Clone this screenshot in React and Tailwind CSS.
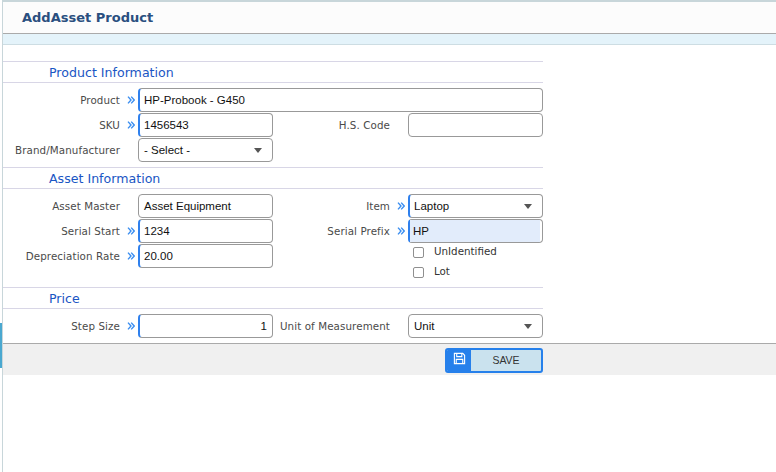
const labelClass = "pt-[1px] text-right text-[10.3px] text-[#4a4a4a] pr-[18px] whitespace-nowrap tracking-[0.1px]";
const inputClass = "h-[24px] w-full rounded-[4px] border border-[#999999] bg-white px-[5px] pt-[1px] text-[11.5px] text-[#111111] flex items-center";
const lineClass = "border-t border-[#d8d6e6]";
const labelFont = { fontFamily: '"DejaVu Sans", sans-serif' };

function Chevrons() {
  return (
    <svg viewBox="0 0 8 8" className="absolute right-[3px] top-[8px] h-[8px] w-[8px]" fill="none" stroke="#3b8ef0" strokeWidth="1.4">
      <path d="M1 0.6 L4 4 L1 7.4" />
      <path d="M4.2 0.6 L7.2 4 L4.2 7.4" />
    </svg>
  );
}

function Label({ text, required }) {
  return (
    <div className="relative flex h-[24px] items-center justify-end">
      <span className={labelClass} style={labelFont}>{text}</span>
      {required && <Chevrons />}
    </div>
  );
}

function Field({ value, required, right }) {
  return (
    <div className={`${inputClass} ${required ? "border-l-2 border-l-[#2f80ed] pl-[4px]" : ""} ${right ? "justify-end" : ""}`}>
      {value}
    </div>
  );
}

function SelectBox({ value, required }) {
  return (
    <div className={`${inputClass} justify-between pr-[10px] ${required ? "border-l-2 border-l-[#2f80ed] pl-[4px]" : ""}`}>
      <span>{value}</span>
      <span className="h-0 w-0 border-x-[4.5px] border-t-[5px] border-x-transparent border-t-[#555555]" />
    </div>
  );
}

function SectionTitle({ text }) {
  return (
    <div className={`${lineClass} h-[21px] pl-[46px] pt-[2px] text-[12.6px] leading-[17px] text-[#1a56c4]`} style={labelFont}>
      {text}
    </div>
  );
}

function Check({ text }) {
  return (
    <div className="flex h-[20px] items-center pl-[5px]">
      <span className="h-[11px] w-[11px] rounded-[2px] border border-[#8f8f8f] bg-white" />
      <span className="pl-[10px] text-[10.3px] text-[#333333]" style={labelFont}>{text}</span>
    </div>
  );
}

const gridClass = "grid grid-cols-[135px_135px_135px_135px] gap-y-[1px] border-t border-[#d8d6e6] pt-[5px] w-[540px]";

export default function App() {
  return (
    <div className="relative h-[472px] w-[776px] overflow-hidden bg-white" style={{ fontFamily: '"Liberation Sans", Arial, sans-serif' }}>
      <div className="absolute left-0 top-[323px] h-[45px] w-[2px] bg-[#4aa8d0]" />
      <div className="ml-[2px] h-full border-l border-[#c8d6da]">
        <div className="h-[2px] -ml-[1px] bg-[#c8d6da]" />
        <div className="h-[32px] border-b border-[#aaaaaa] bg-[#fcfcfc] pl-[19px] pt-[6px] text-[13px] font-bold leading-[20px] text-[#2a4f7f]" style={labelFont}>
          AddAsset Product
        </div>
        <div className="h-[11px] border-b border-[#cddde3] bg-[#e4f3fa]" />
        <div className="h-[16px]" />

        <div className="w-[540px]">
          <SectionTitle text="Product Information" />
          <div className={gridClass}>
            <Label text="Product" required />
            <div className="col-span-3 w-[405px]"><Field value="HP-Probook - G450" required /></div>
            <Label text="SKU" required />
            <Field value="1456543" required />
            <Label text="H.S. Code" />
            <Field value="" />
            <Label text="Brand/Manufacturer" />
            <SelectBox value="- Select -" />
          </div>
          <div className="h-[5px]" />

          <SectionTitle text="Asset Information" />
          <div className={gridClass}>
            <Label text="Asset Master" />
            <Field value="Asset Equipment" />
            <Label text="Item" required />
            <SelectBox value="Laptop" required />
            <Label text="Serial Start" required />
            <Field value="1234" required />
            <Label text="Serial Prefix" required />
            <div className="h-[24px] rounded-[4px] border border-l-2 border-[#999999] border-l-[#2f80ed] bg-white">
              <div className="mr-[2px] flex h-full items-center bg-[#e2ecfb] pl-[3px] pt-[1px] text-[11.5px] text-[#111111]">HP</div>
            </div>
            <Label text="Depreciation Rate" required />
            <Field value="20.00" required />
            <div />
            <div className="-mt-[2px]">
              <Check text="UnIdentified" />
              <Check text="Lot" />
            </div>
          </div>
          <div className="h-[5px]" />

          <SectionTitle text="Price" />
          <div className={gridClass}>
            <Label text="Step Size" required />
            <Field value="1" required right />
            <Label text="Unit of Measurement" />
            <SelectBox value="Unit" />
          </div>
        </div>

        <div className="mt-[5px] flex h-[32px] w-full justify-start border-t border-[#aaaaaa] bg-[#f0f0f0] pl-[442px] pt-[4px]">
          <div className="flex h-[25px] w-[98px] overflow-hidden rounded-[3px] border-2 border-[#2680eb] bg-[#cae2ee]">
            <div className="flex w-[24px] items-start justify-center bg-[#2680eb] pt-[2px]">
              <svg viewBox="0 0 14 14" className="h-[13px] w-[13px]" fill="none" stroke="white" strokeWidth="1.2">
                <path d="M1.5 1.5 H10.5 L12.5 3.5 V12.5 H1.5 Z" />
                <path d="M4 1.5 V5 H9.5 V1.5" />
                <path d="M3.5 12.5 V8 H10.5 V12.5" />
              </svg>
            </div>
            <div className="flex flex-1 items-center justify-center text-[10.5px] text-[#333333]">SAVE</div>
          </div>
        </div>
      </div>
    </div>
  );
}
